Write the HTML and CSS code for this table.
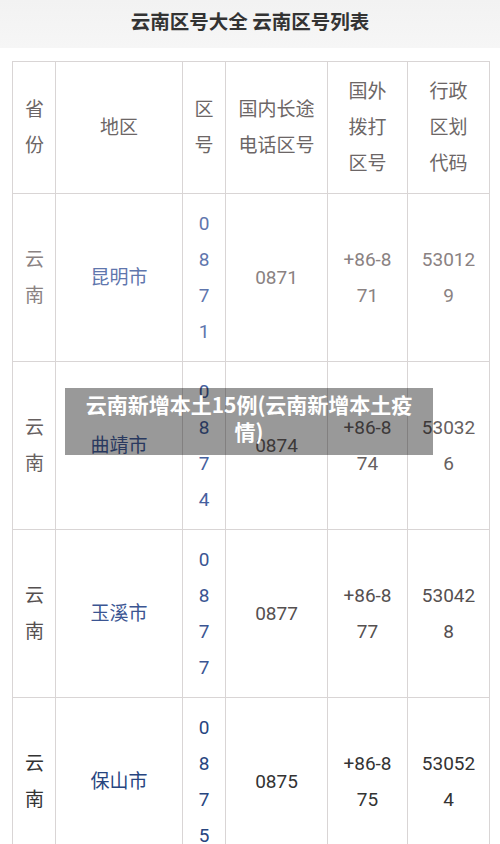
FILE: index.html
```html
<!DOCTYPE html>
<html lang="zh">
<head>
<meta charset="utf-8">
<title>云南区号大全 云南区号列表</title>
<link rel="stylesheet" href="styles.css">
</head>
<body>
<div class="page">
  <header class="topbar">
    <h1 class="title">云南区号大全 云南区号列表</h1>
  </header>
  <main class="content">
    <table class="codes">
      <colgroup>
        <col class="c1"><col class="c2"><col class="c3"><col class="c4"><col class="c5"><col class="c6">
      </colgroup>
      <thead>
        <tr class="head">
          <th>省份</th>
          <th>地区</th>
          <th>区号</th>
          <th>国内长途电话区号</th>
          <th>国外拨打区号</th>
          <th>行政区划代码</th>
        </tr>
      </thead>
      <tbody>
        <tr class="r1">
          <td>云南</td>
          <td><a class="link" href="#">昆明市</a></td>
          <td><a class="link" href="#">0871</a></td>
          <td>0871</td>
          <td>+86-871</td>
          <td>530129</td>
        </tr>
        <tr class="r2">
          <td>云南</td>
          <td><a class="link" href="#">曲靖市</a></td>
          <td><a class="link" href="#">0874</a></td>
          <td>0874</td>
          <td>+86-874</td>
          <td>530326</td>
        </tr>
        <tr class="r3">
          <td>云南</td>
          <td><a class="link" href="#">玉溪市</a></td>
          <td><a class="link" href="#">0877</a></td>
          <td>0877</td>
          <td>+86-877</td>
          <td>530428</td>
        </tr>
        <tr class="r4">
          <td>云南</td>
          <td><a class="link" href="#">保山市</a></td>
          <td><a class="link" href="#">0875</a></td>
          <td>0875</td>
          <td>+86-875</td>
          <td>530524</td>
        </tr>
      </tbody>
    </table>
  </main>
  <div class="caption">云南新增本土15例(云南新增本土疫情)</div>
</div>
</body>
</html>
```
FILE: styles.css
```css
html, body {
  margin: 0;
  padding: 0;
  background: #ffffff;
}
body {
  font-family: Roboto, "Noto Sans CJK SC", sans-serif;
  overflow: hidden;
}
.page {
  position: relative;
  width: 500px;
  height: 844px;
  overflow: hidden;
}
.topbar {
  height: 48px;
  background: linear-gradient(#f2f2f2, #f6f6f6);
  display: flex;
  align-items: center;
  justify-content: center;
}
.title {
  margin: 0;
  padding-bottom: 6px;
  font-family: "Noto Sans CJK SC", sans-serif;
  font-size: 19.5px;
  font-weight: 700;
  color: #333333;
  line-height: 28px;
}
.content {
  padding: 13px 10px 0 12px;
}
.codes {
  width: 477px;
  table-layout: fixed;
  border-collapse: collapse;
  font-size: 19px;
  line-height: 36px;
}
.c1 { width: 43px; }
.c2 { width: 127px; }
.c3 { width: 43px; }
.c4 { width: 102px; }
.c5 { width: 80px; }
.c6 { width: 82px; }
.codes th,
.codes td {
  border: 1px solid #d9d5d5;
  padding: 11.5px 12px;
  text-align: center;
  vertical-align: middle;
  font-weight: 400;
  word-break: break-all;
  font-family: Roboto, "Noto Sans CJK SC", sans-serif;
}
.codes td {
  padding-top: 11px;
  padding-bottom: 11px;
}
.codes th:nth-child(3),
.codes td:nth-child(3) {
  padding-left: 11px;
  padding-right: 11px;
}
.codes th:nth-child(6),
.codes td:nth-child(6) {
  padding-left: 13px;
  padding-right: 13px;
}
.head th { color: #6c6666; }
.codes tbody tr { height: 168px; }
.link { text-decoration: none; }
.r1 td { color: #8a8282; }
.r1 .link { color: #5f76ad; }
.r2 td { color: #666060; }
.r2 .link { color: #45609e; }
.r3 td { color: #555050; }
.r3 .link { color: #3b5592; }
.r4 td { color: #333333; }
.r4 .link { color: #27457f; }
.caption {
  position: absolute;
  left: 65px;
  top: 388px;
  width: 368px;
  height: 67px;
  box-sizing: border-box;
  padding: 3px 12px 0;
  background: rgba(0, 0, 0, 0.4);
  color: #ffffff;
  font-family: "Noto Sans CJK SC", sans-serif;
  font-weight: 700;
  font-size: 21px;
  line-height: 27px;
  text-align: center;
}
```
